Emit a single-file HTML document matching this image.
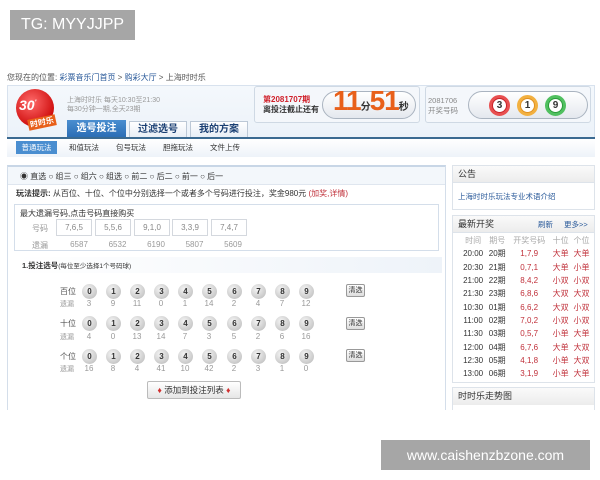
<!DOCTYPE html>
<html><head><meta charset="utf-8"><style>
*{margin:0;padding:0;box-sizing:border-box}
body{width:600px;height:480px;background:#fff;position:relative;overflow:hidden;font-family:"Liberation Sans","Noto Sans CJK SC",sans-serif;font-size:8px;color:#333}
.a{position:absolute;white-space:nowrap}
.ball{position:absolute;width:15px;height:15px;border-radius:50%;background:radial-gradient(circle at 40% 35%,#f4f4f4,#c9c9c9 70%,#b0b0b0);font-size:8px;font-weight:bold;text-align:center;line-height:15px;color:#333}
.miss{position:absolute;width:20px;text-align:center;color:#999;font-size:8px}
.btn{position:absolute;width:19px;height:13px;border:1px solid #999;border-radius:2px;background:linear-gradient(#fff,#ddd);font-size:7px;text-align:center;line-height:11px}
.r td{color:#c0303a}
table{border-collapse:collapse;font-size:8px}
td{height:13.3px;text-align:center;padding:0}
</style></head><body>
<div class="a" style="left:10px;top:10px;width:125px;height:30px;background:#a6a6a6;color:#fff;font-size:16px;line-height:30px;text-align:center">TG: MYYJJPP</div>

<div class="a" style="left:7px;top:72px;font-size:8px;color:#555">您现在的位置: <span style="color:#2a5a9a">彩票音乐门首页</span> &gt; <span style="color:#2a5a9a">购彩大厅</span> &gt; 上海时时乐</div>

<div class="a" style="left:7px;top:85px;width:588px;height:72px;background:linear-gradient(#f4f8fc,#e9f0f8);border:1px solid #d8e2ee"></div>
<div class="a" style="left:16px;top:89px;width:38px;height:38px;border-radius:50%;background:radial-gradient(circle at 40% 35%,#ff6a6a,#d01010 70%,#a00);"></div>
<div class="a" style="left:19px;top:97px;color:#fff;font-size:14px;font-style:italic;font-weight:bold">30<sup style="font-size:7px">'</sup></div>
<div class="a" style="left:28px;top:117px;color:#fff;font-size:8px;font-weight:bold;background:#e8601a;padding:0 2px;transform:rotate(-12deg)">时时乐</div>
<div class="a" style="left:67px;top:96px;color:#999;font-size:7px;line-height:9px">上海时时乐 每天10:30至21:30<br>每30分钟一期,全天23期</div>
<div class="a" style="left:67px;top:120px;width:59px;height:18px;background:linear-gradient(#4a8ed0,#2a6cb4);color:#fff;font-size:10px;font-weight:bold;text-align:center;line-height:18px">选号投注</div>
<div class="a" style="left:129px;top:121px;width:58px;height:17px;background:linear-gradient(#fff,#e8eef6);border:1px solid #bcc8d6;color:#1a3f73;font-size:10px;font-weight:bold;text-align:center;line-height:15px">过滤选号</div>
<div class="a" style="left:190px;top:121px;width:58px;height:17px;background:linear-gradient(#fff,#e8eef6);border:1px solid #bcc8d6;color:#1a3f73;font-size:10px;font-weight:bold;text-align:center;line-height:15px">我的方案</div>
<div class="a" style="left:7px;top:137px;width:588px;height:2px;background:#3b6a91"></div>
<div class="a" style="left:7px;top:139px;width:588px;height:18px;background:linear-gradient(#fff,#eef3f9)"></div>
<div class="a" style="left:16px;top:141px;width:41px;height:13px;background:#4a8ed0;color:#fff;font-size:7.5px;text-align:center;line-height:13px">普通玩法</div>
<div class="a" style="left:69px;top:142px;font-size:7.5px;color:#333">和值玩法</div>
<div class="a" style="left:116px;top:142px;font-size:7.5px">包号玩法</div>
<div class="a" style="left:163px;top:142px;font-size:7.5px">胆拖玩法</div>
<div class="a" style="left:210px;top:142px;font-size:7.5px">文件上传</div>

<div class="a" style="left:254px;top:86px;width:166px;height:37px;background:#f4f7fb;border:1px solid #cfd9e4;border-radius:3px"></div>
<div class="a" style="left:263px;top:95px;color:#d0202a;font-size:8px;font-weight:bold;line-height:10px">第2081707期<br><span style="color:#333">离投注截止还有</span></div>
<div class="a" style="left:322px;top:91px;width:94px;height:28px;border:1px solid #aab4c0;border-radius:14px;background:linear-gradient(#fff,#e4e8ee)"></div>
<div class="a" style="left:333px;top:85px;color:#e8601a;font-size:28px;font-weight:bold;letter-spacing:-1px">11<span style="font-size:10px;color:#333">分</span>51<span style="font-size:10px;color:#333">秒</span></div>
<div class="a" style="left:425px;top:86px;width:166px;height:37px;background:#f4f7fb;border:1px solid #cfd9e4;border-radius:3px"></div>
<div class="a" style="left:428px;top:96px;color:#888;font-size:7.5px;line-height:10px">2081706<br>开奖号码</div>
<div class="a" style="left:468px;top:91px;width:120px;height:28px;border:1px solid #aab4c0;border-radius:14px;background:linear-gradient(#fff,#e4e8ee)"></div>
<div class="a" style="left:489px;top:95px;width:21px;height:21px;border-radius:50%;background:#c8222a;border:3px solid #e85050"><div style="width:13px;height:13px;margin:1px;border-radius:50%;background:#fff;font:bold 10px 'Liberation Sans';text-align:center;line-height:13px">3</div></div>
<div class="a" style="left:517px;top:95px;width:21px;height:21px;border-radius:50%;background:#e09020;border:3px solid #f2b040"><div style="width:13px;height:13px;margin:1px;border-radius:50%;background:#fff;font:bold 10px 'Liberation Sans';text-align:center;line-height:13px">1</div></div>
<div class="a" style="left:545px;top:95px;width:21px;height:21px;border-radius:50%;background:#2a9a3a;border:3px solid #50c060"><div style="width:13px;height:13px;margin:1px;border-radius:50%;background:#fff;font:bold 10px 'Liberation Sans';text-align:center;line-height:13px">9</div></div>

<div class="a" style="left:7px;top:165px;width:439px;height:250px;border:1px solid #d4deea;border-top:2px solid #c8d6e6;background:#fff"></div>
<div class="a" style="left:8px;top:167px;width:437px;height:18px;background:#f3f7fb;border-bottom:1px solid #dfe6ef"></div>
<div class="a" style="left:20px;top:171px;font-size:8px">◉ 直选 ○ 组三 ○ 组六 ○ 组选 ○ 前二 ○ 后二 ○ 前一 ○ 后一</div>
<div class="a" style="left:16px;top:188px;font-size:8px"><b>玩法提示:</b> 从百位、十位、个位中分别选择一个或者多个号码进行投注，奖金980元 <span style="color:#c0303a">(加奖,详情)</span></div>
<div class="a" style="left:14px;top:204px;width:425px;height:47px;border:1px solid #d4deea"></div>
<div class="a" style="left:20px;top:208px;font-size:8px">最大遗漏号码,点击号码直接购买</div>
<div class="a" style="left:32px;top:223px;color:#999">号码</div>
<div class="a" style="left:32px;top:240px;color:#999">遗漏</div>
<div class="a" style="left:56px;top:219px;width:36px;height:17px;border:1px solid #d4d8de;text-align:center;line-height:15px;color:#888">7,6,5</div>
<div class="a" style="left:95px;top:219px;width:36px;height:17px;border:1px solid #d4d8de;text-align:center;line-height:15px;color:#888">5,5,6</div>
<div class="a" style="left:134px;top:219px;width:36px;height:17px;border:1px solid #d4d8de;text-align:center;line-height:15px;color:#888">9,1,0</div>
<div class="a" style="left:172px;top:219px;width:36px;height:17px;border:1px solid #d4d8de;text-align:center;line-height:15px;color:#888">3,3,9</div>
<div class="a" style="left:211px;top:219px;width:36px;height:17px;border:1px solid #d4d8de;text-align:center;line-height:15px;color:#888">7,4,7</div>
<div class="a" style="left:60px;top:240px;width:290px;color:#999"><span style="display:inline-block;width:38px;text-align:center">6587</span><span style="display:inline-block;width:39px;text-align:center">6532</span><span style="display:inline-block;width:38px;text-align:center">6190</span><span style="display:inline-block;width:39px;text-align:center">5807</span><span style="display:inline-block;width:38px;text-align:center">5609</span></div>
<div class="a" style="left:12px;top:257px;width:430px;height:16px;background:linear-gradient(90deg,#fff,#eef3f9)"></div>
<div class="a" style="left:22px;top:260px;font-size:7.5px"><b>1.投注选号</b><span style="font-size:6.5px">(每位至少选择1个号码球)</span></div>

<div class="a" style="left:60px;top:286px;color:#555;font-size:8px">百位</div><div class="a" style="left:60px;top:299px;color:#999;font-size:7px">遗漏</div>
<div class="a" style="left:60px;top:318px;color:#555;font-size:8px">十位</div><div class="a" style="left:60px;top:332px;color:#999;font-size:7px">遗漏</div>
<div class="a" style="left:60px;top:351px;color:#555;font-size:8px">个位</div><div class="a" style="left:60px;top:364px;color:#999;font-size:7px">遗漏</div>

<div class="ball" style="left:82px;top:284px">0</div><div class="ball" style="left:106px;top:284px">1</div><div class="ball" style="left:130px;top:284px">2</div><div class="ball" style="left:154px;top:284px">3</div><div class="ball" style="left:178px;top:284px">4</div><div class="ball" style="left:202px;top:284px">5</div><div class="ball" style="left:227px;top:284px">6</div><div class="ball" style="left:251px;top:284px">7</div><div class="ball" style="left:275px;top:284px">8</div><div class="ball" style="left:299px;top:284px">9</div>
<div class="miss" style="left:79px;top:299px">3</div><div class="miss" style="left:103px;top:299px">9</div><div class="miss" style="left:127px;top:299px">11</div><div class="miss" style="left:151px;top:299px">0</div><div class="miss" style="left:175px;top:299px">1</div><div class="miss" style="left:199px;top:299px">14</div><div class="miss" style="left:224px;top:299px">2</div><div class="miss" style="left:248px;top:299px">4</div><div class="miss" style="left:272px;top:299px">7</div><div class="miss" style="left:296px;top:299px">12</div>
<div class="ball" style="left:82px;top:316px">0</div><div class="ball" style="left:106px;top:316px">1</div><div class="ball" style="left:130px;top:316px">2</div><div class="ball" style="left:154px;top:316px">3</div><div class="ball" style="left:178px;top:316px">4</div><div class="ball" style="left:202px;top:316px">5</div><div class="ball" style="left:227px;top:316px">6</div><div class="ball" style="left:251px;top:316px">7</div><div class="ball" style="left:275px;top:316px">8</div><div class="ball" style="left:299px;top:316px">9</div>
<div class="miss" style="left:79px;top:332px">4</div><div class="miss" style="left:103px;top:332px">0</div><div class="miss" style="left:127px;top:332px">13</div><div class="miss" style="left:151px;top:332px">14</div><div class="miss" style="left:175px;top:332px">7</div><div class="miss" style="left:199px;top:332px">3</div><div class="miss" style="left:224px;top:332px">5</div><div class="miss" style="left:248px;top:332px">2</div><div class="miss" style="left:272px;top:332px">6</div><div class="miss" style="left:296px;top:332px">16</div>
<div class="ball" style="left:82px;top:349px">0</div><div class="ball" style="left:106px;top:349px">1</div><div class="ball" style="left:130px;top:349px">2</div><div class="ball" style="left:154px;top:349px">3</div><div class="ball" style="left:178px;top:349px">4</div><div class="ball" style="left:202px;top:349px">5</div><div class="ball" style="left:227px;top:349px">6</div><div class="ball" style="left:251px;top:349px">7</div><div class="ball" style="left:275px;top:349px">8</div><div class="ball" style="left:299px;top:349px">9</div>
<div class="miss" style="left:79px;top:364px">16</div><div class="miss" style="left:103px;top:364px">8</div><div class="miss" style="left:127px;top:364px">4</div><div class="miss" style="left:151px;top:364px">41</div><div class="miss" style="left:175px;top:364px">10</div><div class="miss" style="left:199px;top:364px">42</div><div class="miss" style="left:224px;top:364px">2</div><div class="miss" style="left:248px;top:364px">3</div><div class="miss" style="left:272px;top:364px">1</div><div class="miss" style="left:296px;top:364px">0</div>

<div class="btn" style="left:346px;top:284px">清选</div>
<div class="btn" style="left:346px;top:317px">清选</div>
<div class="btn" style="left:346px;top:349px">清选</div>
<div class="a" style="left:147px;top:381px;width:94px;height:18px;border:1px solid #bbb;border-radius:2px;background:linear-gradient(#fff,#e6e6e6);font-size:8.5px;text-align:center;line-height:16px"><span style="color:#d03030">♦</span> 添加到投注列表 <span style="color:#d03030">♦</span></div>

<div class="a" style="left:452px;top:165px;width:143px;height:45px;border:1px solid #dde3ea"></div>
<div class="a" style="left:453px;top:166px;width:141px;height:17px;background:linear-gradient(#fafafa,#ececec);border-bottom:1px solid #dde3ea;font-size:9px;line-height:17px;padding-left:5px">公告</div>
<div class="a" style="left:458px;top:191px;color:#2a5a9a;font-size:7.5px">上海时时乐玩法专业术语介绍</div>

<div class="a" style="left:452px;top:215px;width:143px;height:168px;border:1px solid #dde3ea"></div>
<div class="a" style="left:453px;top:216px;width:141px;height:17px;background:linear-gradient(#fafafa,#ececec);border-bottom:1px solid #dde3ea;font-size:9px;line-height:17px;padding-left:5px">最新开奖<span style="position:absolute;left:85px;color:#2a5a9a;font-size:7.5px">刷新</span><span style="position:absolute;left:111px;color:#2a5a9a;font-size:7.5px">更多&gt;&gt;</span></div>
<table class="a" style="left:460px;top:234px;width:132px">
<tr style="color:#aaa"><td>时间</td><td>期号</td><td>开奖号码</td><td>十位</td><td>个位</td></tr>
<tr class="r"><td style="color:#333">20:00</td><td style="color:#333">20期</td><td>1,7,9</td><td>大单</td><td>大单</td></tr>
<tr class="r"><td style="color:#333">20:30</td><td style="color:#333">21期</td><td>0,7,1</td><td>大单</td><td>小单</td></tr>
<tr class="r"><td style="color:#333">21:00</td><td style="color:#333">22期</td><td>8,4,2</td><td>小双</td><td>小双</td></tr>
<tr class="r"><td style="color:#333">21:30</td><td style="color:#333">23期</td><td>6,8,6</td><td>大双</td><td>大双</td></tr>
<tr class="r"><td style="color:#333">10:30</td><td style="color:#333">01期</td><td>6,6,2</td><td>大双</td><td>小双</td></tr>
<tr class="r"><td style="color:#333">11:00</td><td style="color:#333">02期</td><td>7,0,2</td><td>小双</td><td>小双</td></tr>
<tr class="r"><td style="color:#333">11:30</td><td style="color:#333">03期</td><td>0,5,7</td><td>小单</td><td>大单</td></tr>
<tr class="r"><td style="color:#333">12:00</td><td style="color:#333">04期</td><td>6,7,6</td><td>大单</td><td>大双</td></tr>
<tr class="r"><td style="color:#333">12:30</td><td style="color:#333">05期</td><td>4,1,8</td><td>小单</td><td>大双</td></tr>
<tr class="r"><td style="color:#333">13:00</td><td style="color:#333">06期</td><td>3,1,9</td><td>小单</td><td>大单</td></tr>
</table>
<div class="a" style="left:452px;top:387px;width:143px;height:30px;border:1px solid #dde3ea"></div>
<div class="a" style="left:453px;top:388px;width:141px;height:17px;background:linear-gradient(#fafafa,#ececec);font-size:9px;line-height:17px;padding-left:5px">时时乐走势图</div>

<div class="a" style="left:0;top:410px;width:600px;height:70px;background:#fff"></div>
<div class="a" style="left:381px;top:440px;width:209px;height:30px;background:#a6a6a6;color:#fff;font-size:14px;line-height:30px;text-align:center">www.caishenzbzone.com</div>
</body></html>
